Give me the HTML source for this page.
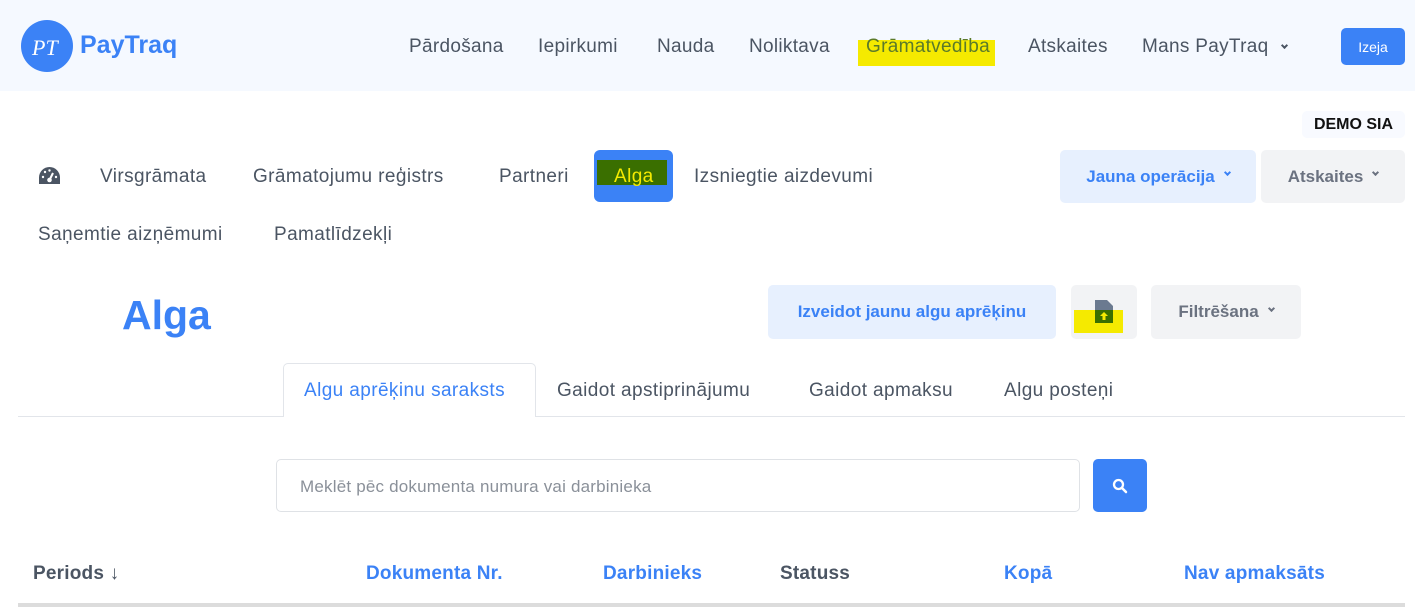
<!DOCTYPE html>
<html><head><meta charset="utf-8"><style>
*{margin:0;padding:0;box-sizing:border-box}
body{width:1415px;height:607px;overflow:hidden;background:#fff;font-family:"Liberation Sans",sans-serif;color:#4b5563;position:relative}
.a{position:absolute;white-space:nowrap}
.nav{font-size:19px;top:36px;color:#4b5563;letter-spacing:0.3px}
.sub{font-size:19px;color:#4b5563;letter-spacing:0.4px}
.btn{position:absolute;border-radius:5px;display:flex;align-items:center;justify-content:center;font-size:17px;font-weight:bold}
.th{position:absolute;top:563px;font-size:19px;font-weight:bold;color:#3b82f6;letter-spacing:0.2px}
.chev{display:inline-block;width:6px;height:6px;border-right:2px solid currentColor;border-bottom:2px solid currentColor;transform:rotate(45deg);margin-left:10px;position:relative;top:-4px}
</style></head><body>
<div class="a" style="left:0;top:0;width:1415px;height:91px;background:#f5f9ff"></div>
<svg class="a" style="left:21px;top:20px" width="52" height="52" viewBox="0 0 52 52"><circle cx="26" cy="26" r="26" fill="#3b82f6"/><text x="11" y="35" font-family="Liberation Serif" font-style="italic" font-size="22" fill="#fff">PT</text></svg>
<div class="a" style="left:80px;top:31px;font-size:25px;font-weight:bold;color:#3b82f6;letter-spacing:0px">PayTraq</div>
<div class="a nav" style="left:409px">Pārdošana</div>
<div class="a nav" style="left:538px">Iepirkumi</div>
<div class="a nav" style="left:657px">Nauda</div>
<div class="a nav" style="left:749px">Noliktava</div>
<div class="a" style="left:858px;top:40px;width:137px;height:26px;background:#f5ea00"></div>
<div class="a nav" style="left:866px;color:#5b7a2a">Grāmatvedība</div>
<div class="a nav" style="left:1028px">Atskaites</div>
<div class="a nav" style="left:1142px">Mans PayTraq<span class="chev" style="width:5px;height:5px;margin-left:14px"></span></div>
<div class="btn" style="left:1341px;top:28px;width:64px;height:37px;background:#3b82f6;color:#fff;font-weight:normal;font-size:14px">Izeja</div>
<div class="btn" style="left:1302px;top:111px;width:103px;height:27px;background:#f8faff;color:#111;font-size:16px;font-weight:bold">DEMO SIA</div>
<svg class="a" style="left:38px;top:166px" width="23" height="20" viewBox="0 0 23 20"><path d="M11.5 1A10.5 10.5 0 0 0 1 11.5V18h21v-6.5A10.5 10.5 0 0 0 11.5 1z" fill="#4b5563"/><circle cx="11.5" cy="14" r="2.3" fill="#fff"/><path d="M11.5 14 15 7" stroke="#fff" stroke-width="2"/><circle cx="5" cy="11" r="1.2" fill="#fff"/><circle cx="7" cy="6" r="1.2" fill="#fff"/><circle cx="11.5" cy="4.5" r="1.2" fill="#fff"/><circle cx="18" cy="11" r="1.2" fill="#fff"/></svg>
<div class="a sub" style="left:100px;top:166px">Virsgrāmata</div>
<div class="a sub" style="left:253px;top:166px">Grāmatojumu reģistrs</div>
<div class="a sub" style="left:499px;top:166px">Partneri</div>
<div class="a" style="left:594px;top:150px;width:79px;height:52px;background:#3b82f6;border-radius:6px"></div>
<div class="a" style="left:597px;top:160px;width:70px;height:25px;background:#3a6f00"></div>
<div class="a sub" style="left:614px;top:166px;color:#f5ea00">Alga</div>
<div class="a sub" style="left:694px;top:166px">Izsniegtie aizdevumi</div>
<div class="a sub" style="left:38px;top:224px">Saņemtie aizņēmumi</div>
<div class="a sub" style="left:274px;top:224px">Pamatlīdzekļi</div>
<div class="btn" style="left:1060px;top:150px;width:196px;height:53px;background:#e7f0fe;color:#3b82f6">Jauna operācija<span class="chev" style="width:5px;height:5px"></span></div>
<div class="btn" style="left:1261px;top:150px;width:144px;height:53px;background:#f2f3f5;color:#6b7280">Atskaites<span class="chev" style="width:5px;height:5px"></span></div>
<div class="a" style="left:122px;top:292px;font-size:41px;font-weight:bold;color:#3b82f6">Alga</div>
<div class="btn" style="left:768px;top:285px;width:288px;height:54px;background:#e7f0fe;color:#3b82f6">Izveidot jaunu algu aprēķinu</div>
<div class="btn" style="left:1071px;top:285px;width:66px;height:54px;background:#f2f3f5"></div>
<div class="a" style="left:1074px;top:310px;width:49px;height:23px;background:#f5ea00"></div>
<svg class="a" style="left:1095px;top:300px" width="18" height="23" viewBox="0 0 18 23"><path d="M0 0h12l6 6v17H0z" fill="#6b7a90"/><path d="M0 10h18v13H0z" fill="#3a6f00"/><path d="M9 12l-4 4h2.5v4h3v-4H13z" fill="#f5ea00"/></svg>
<div class="btn" style="left:1151px;top:285px;width:150px;height:54px;background:#f2f3f5;color:#6b7280">Filtrēšana<span class="chev" style="width:5px;height:5px"></span></div>
<div class="a" style="left:18px;top:416px;width:1387px;height:1px;background:#e2e5ea"></div>
<div class="a" style="left:283px;top:363px;width:253px;height:54px;background:#fff;border:1px solid #e2e5ea;border-bottom:none;border-radius:5px 5px 0 0"></div>
<div class="a sub" style="left:304px;top:380px;color:#3b82f6">Algu aprēķinu saraksts</div>
<div class="a sub" style="left:557px;top:380px">Gaidot apstiprinājumu</div>
<div class="a sub" style="left:809px;top:380px">Gaidot apmaksu</div>
<div class="a sub" style="left:1004px;top:380px">Algu posteņi</div>
<div class="a" style="left:276px;top:459px;width:804px;height:53px;border:1px solid #dfe2e6;border-radius:5px"></div>
<div class="a" style="left:300px;top:477px;font-size:17px;color:#8a9099;letter-spacing:0.2px">Meklēt pēc dokumenta numura vai darbinieka</div>
<div class="btn" style="left:1093px;top:459px;width:54px;height:53px;background:#3b82f6"><svg width="16" height="16" viewBox="0 0 16 16"><circle cx="6.5" cy="6.5" r="4.5" fill="none" stroke="#fff" stroke-width="2.3"/><path d="M10 10l4 4" stroke="#fff" stroke-width="2.5" stroke-linecap="round"/></svg></div>
<div class="th" style="left:33px;color:#4b5563">Periods ↓</div>
<div class="th" style="left:366px">Dokumenta Nr.</div>
<div class="th" style="left:603px">Darbinieks</div>
<div class="th" style="left:780px;color:#4b5563">Statuss</div>
<div class="th" style="left:1004px">Kopā</div>
<div class="th" style="left:1184px">Nav apmaksāts</div>
<div class="a" style="left:18px;top:603px;width:1387px;height:4px;background:#dcdcdc"></div>
</body></html>
